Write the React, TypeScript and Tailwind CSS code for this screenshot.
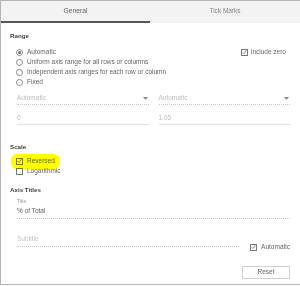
import React from 'react';

const Check: React.FC<{ checked?: boolean }> = ({ checked }) => (
  <span className="w-[7px] h-[7px] border border-[#7a7a7a] flex items-center justify-center shrink-0">
    {checked && (
      <svg width="6" height="6" viewBox="0 0 6 6">
        <path d="M1 3.2 L2.4 4.8 L5.2 0.8" fill="none" stroke="#555" strokeWidth="0.8" />
      </svg>
    )}
  </span>
);

const Radio: React.FC<{ on?: boolean }> = ({ on }) => (
  <span className="w-[7px] h-[7px] rounded-full border border-[#8a8a8a] flex items-center justify-center shrink-0">
    {on && <span className="w-[3px] h-[3px] rounded-full bg-[#6a6a6a]" />}
  </span>
);

const Arrow = () => (
  <svg width="5" height="3" viewBox="0 0 5 3" className="mr-[1px]">
    <path d="M0 0 L5 0 L2.5 3 Z" fill="#8a8a8a" />
  </svg>
);

const App: React.FC = () => {
  const radios = [
    'Automatic',
    'Uniform axis range for all rows or columns',
    'Independent axis ranges for each row or column',
    'Fixed',
  ];

  return (
    <div className="relative w-[300px] h-[285px] border-l border-t border-b border-[#b4b4b4] bg-white font-['Liberation_Sans',Arial,sans-serif] text-[6.5px] text-[#666] leading-none">
      {/* tabs */}
      <div className="flex h-[22px] bg-[#f3f3f3]">
        <div className="w-[149px] border-b-2 border-[#555] flex items-center justify-center text-[6.8px] text-[#666]">General</div>
        <div className="flex-1 flex items-center justify-center text-[6.5px] text-[#888] pb-[2px]">Tick Marks</div>
      </div>

      <div className="pl-[9px] pr-[10px]">
        <div className="mt-[8px] h-[10px] flex items-center font-bold text-[6.2px] text-[#444]">Range</div>

        <div className="mt-[6px]">
          {radios.map((r, i) => (
            <div key={r} className="h-[10px] flex items-center">
              <div className="ml-[6px] flex items-center gap-[4px]">
                <Radio on={i === 0} />
                <span>{r}</span>
              </div>
              {i === 0 && (
                <div className="ml-auto pr-[4px] flex items-center gap-[3px]">
                  <Check checked />
                  <span>Include zero</span>
                </div>
              )}
            </div>
          ))}
        </div>

        <div className="mt-[5px] pl-[7px] grid grid-cols-2 gap-x-[10px]">
          <div className="h-[13px] border-b border-dotted border-[#c8c8c8] flex items-center justify-between text-[#bdbdbd]">
            <span>Automatic</span>
            <Arrow />
          </div>
          <div className="h-[13px] border-b border-dotted border-[#c8c8c8] flex items-center justify-between text-[#bdbdbd]">
            <span>Automatic</span>
            <Arrow />
          </div>
        </div>

        <div className="mt-[7px] pl-[7px] grid grid-cols-2 gap-x-[10px]">
          <div className="h-[13px] border-b border-[#e2e2e2] flex items-center text-[#bdbdbd]">0</div>
          <div className="h-[13px] border-b border-[#e2e2e2] flex items-center text-[#bdbdbd]">1.05</div>
        </div>

        <div className="mt-[17px] h-[10px] flex items-center font-bold text-[6.2px] text-[#444]">Scale</div>

        <div className="mt-[4px]">
          <div className="h-[10px] flex items-center ml-[6px] gap-[4px]">
            <Check checked />
            <span>Reversed</span>
          </div>
          <div className="h-[10px] flex items-center ml-[6px] gap-[4px]">
            <Check />
            <span>Logarithmic</span>
          </div>
        </div>

        <div className="mt-[9px] h-[10px] flex items-center font-bold text-[6.2px] text-[#444]">Axis Titles</div>

        <div className="mt-[2px] pl-[7px] h-[8px] flex items-center text-[5px] text-[#999]">Title</div>
        <div className="ml-[7px] h-[14px] border-b border-dotted border-[#c8c8c8] flex items-center text-[#666]">% of Total</div>

        <div className="mt-[14px] flex items-start">
          <div className="ml-[7px] w-[223px] h-[14px] border-b border-dotted border-[#c8c8c8] flex items-center text-[#c4c4c4]">Subtitle</div>
          <div className="ml-[11px] mt-[10px] h-[8px] flex items-center gap-[4px]">
            <Check checked />
            <span>Automatic</span>
          </div>
        </div>

        <div className="mt-[15px] flex justify-end">
          <button className="w-[48px] h-[13px] border border-[#d0d0d0] bg-white flex items-center justify-center text-[#666]">Reset</button>
        </div>
      </div>

      {/* marker highlight annotation */}
      <div className="absolute left-[10px] top-[153px] w-[49px] h-[15px] bg-[#ffff00] rounded-[6px] mix-blend-multiply pointer-events-none" />
    </div>
  );
};

export default App;
